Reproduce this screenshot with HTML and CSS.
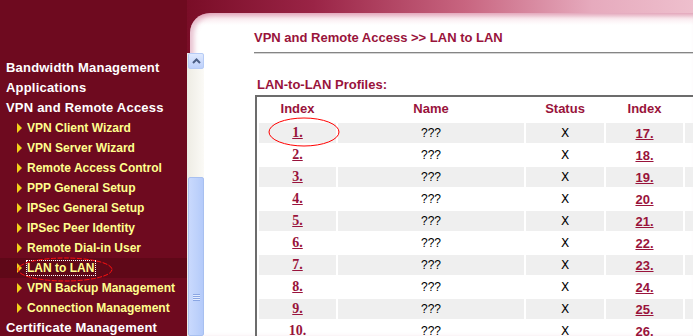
FILE: index.html
```html
<html>
    <head>
       <link rel="stylesheet" href="styles.css">
    </head>
    <body>
       <div class="page">
          <!-- left menu frame -->
          <div class="side">
             <ul class="menu">
                <li class="group">Bandwidth Management</li>
                <li class="group">Applications</li>
                <li class="group">VPN and Remote Access</li>
                <li class="item"><i class="arrow"></i>VPN Client Wizard</li>
                <li class="item"><i class="arrow"></i>VPN Server Wizard</li>
                <li class="item"><i class="arrow"></i>Remote Access Control</li>
                <li class="item"><i class="arrow"></i>PPP General Setup</li>
                <li class="item"><i class="arrow"></i>IPSec General Setup</li>
                <li class="item"><i class="arrow"></i>IPSec Peer Identity</li>
                <li class="item"><i class="arrow"></i>Remote Dial-in User</li>
                <li class="item current"><i class="arrow"></i><span class="focus">LAN to LAN</span>
                   <svg class="mark-side" width="96" height="25" viewBox="0 0 96 25"><ellipse cx="48" cy="12.5" rx="47" ry="11.5" fill="none" stroke="#ff1010" stroke-width="1" stroke-dasharray="5 1.5"/></svg>
                </li>
                <li class="item"><i class="arrow"></i>VPN Backup Management</li>
                <li class="item"><i class="arrow"></i>Connection Management</li>
                <li class="group">Certificate Management</li>
             </ul>
          </div>
          <!-- main frame -->
          <div class="main">
             <div class="panel">
                <div class="scrollbar">
                   <div class="sb-up">
                      <svg width="9" height="6" viewBox="0 0 9 6"><path d="M1 5 L4.5 1.5 L8 5" fill="none" stroke="#4c5f86" stroke-width="2"/></svg>
                   </div>
                   <div class="sb-track"></div>
                   <div class="sb-thumb"><span class="grip"></span></div>
                </div>
                <div class="content">
                   <div class="title">VPN and Remote Access &gt;&gt; LAN to LAN</div>
                   <div class="subtitle">LAN-to-LAN Profiles:</div>
                   <table class="profiles">
                      <colgroup>
                         <col class="c-idx"><col class="c-name"><col class="c-stat"><col class="c-idx"><col class="c-name">
                      </colgroup>
                      <tr>
                         <th>Index</th><th>Name</th><th>Status</th><th>Index</th><th></th>
                      </tr>
                      <tr class="odd">
                         <td class="mark-cell"><a class="num" href="#">1.</a>
                            <svg class="mark-one" width="72" height="30" viewBox="0 0 72 30"><ellipse cx="36" cy="15" rx="35" ry="14" fill="none" stroke="#ff0000" stroke-width="1"/></svg>
                         </td>
                         <td>???</td><td class="x">X</td><td><a class="num2" href="#">17.</a></td><td></td>
                      </tr>
                      <tr>
                         <td><a class="num" href="#">2.</a></td><td>???</td><td class="x">X</td><td><a class="num2" href="#">18.</a></td><td></td>
                      </tr>
                      <tr class="odd">
                         <td><a class="num" href="#">3.</a></td><td>???</td><td class="x">X</td><td><a class="num2" href="#">19.</a></td><td></td>
                      </tr>
                      <tr>
                         <td><a class="num" href="#">4.</a></td><td>???</td><td class="x">X</td><td><a class="num2" href="#">20.</a></td><td></td>
                      </tr>
                      <tr class="odd">
                         <td><a class="num" href="#">5.</a></td><td>???</td><td class="x">X</td><td><a class="num2" href="#">21.</a></td><td></td>
                      </tr>
                      <tr>
                         <td><a class="num" href="#">6.</a></td><td>???</td><td class="x">X</td><td><a class="num2" href="#">22.</a></td><td></td>
                      </tr>
                      <tr class="odd">
                         <td><a class="num" href="#">7.</a></td><td>???</td><td class="x">X</td><td><a class="num2" href="#">23.</a></td><td></td>
                      </tr>
                      <tr>
                         <td><a class="num" href="#">8.</a></td><td>???</td><td class="x">X</td><td><a class="num2" href="#">24.</a></td><td></td>
                      </tr>
                      <tr class="odd">
                         <td><a class="num" href="#">9.</a></td><td>???</td><td class="x">X</td><td><a class="num2" href="#">25.</a></td><td></td>
                      </tr>
                      <tr>
                         <td><a class="num" href="#">10.</a></td><td>???</td><td class="x">X</td><td><a class="num2" href="#">26.</a></td><td></td>
                      </tr>
                   </table>
                </div>
             </div>
          </div>
       </div>
    </body>
</html>
```

FILE: styles.css
```css
*
{
   margin: 0px;
   padding: 0px;
   box-sizing: border-box;
}
body
{
   font-family: "Liberation Sans", Arial, sans-serif;
   font-size: 12px;
   background-color: #6e0a1f;
   overflow: hidden;
   width: 693px;
   height: 336px;
}
.page
{
   display: flex;
   height: 336px;
}
/* left menu */
.side
{
   width: 187px;
   flex: none;
   background-color: #6e0a1f;
   padding-top: 58px;
}
.menu
{
   list-style: none;
}
.menu li
{
   height: 20px;
   line-height: 20px;
   white-space: nowrap;
   font-weight: bold;
   position: relative;
}
.group
{
   color: #ffffff;
   font-size: 13px;
   letter-spacing: 0.2px;
   padding-left: 6px;
}
.item
{
   color: #ffff8e;
   font-size: 12px;
   padding-left: 17px;
   display: flex;
   align-items: center;
}
.arrow
{
   width: 0;
   height: 0;
   border-left: 5px solid #f3d11a;
   border-top: 5px solid transparent;
   border-bottom: 5px solid transparent;
   margin-right: 5px;
}
.current
{
   background-color: #5f0818;
}
.focus
{
   outline: 1px dotted #ffffff;
   outline-offset: 0px;
   line-height: 14px;
   padding: 0 1px 0 0;
}
.mark-side
{
   position: absolute;
   left: 17px;
   top: -1px;
}
/* main frame */
.main
{
   flex: 1;
   min-width: 0;
   background: linear-gradient(90deg, #7a0d27 0%, #9a2446 25%, #c86580 55%, #e6aabd 80%, #eebfcd 100%);
}
.panel
{
   margin-top: 13px;
   margin-left: 3px;
   height: 323px;
   border-top-left-radius: 20px;
   background: linear-gradient(180deg, #f1c9d5 0px, #fbeef2 6px, #ffffff 12px);
   box-shadow: inset 4px 2px 5px rgba(190, 80, 120, 0.35);
   display: flex;
}
.scrollbar
{
   width: 17px;
   flex: none;
   margin-left: -3px;
   margin-top: 40px;
   display: flex;
   flex-direction: column;
   background: linear-gradient(90deg, #eeece4, #fbfaf6);
}
.sb-up
{
   height: 16px;
   margin: 0 0 0 1px;
   border: 1px solid #b6cbf6;
   border-radius: 2px;
   background: linear-gradient(180deg, #dfe9fe, #bdd0fa);
   display: flex;
   align-items: center;
   justify-content: center;
}
.sb-track
{
   height: 108px;
}
.sb-thumb
{
   flex: 1;
   margin-left: 1px;
   border: 1px solid #a8c0f0;
   border-radius: 2px;
   background: linear-gradient(90deg, #c9d9fd, #bdd1fb 60%, #b4cafa);
   position: relative;
}
.grip
{
   position: absolute;
   left: 4px;
   top: 116px;
   width: 7px;
   height: 7px;
   background: repeating-linear-gradient(180deg, #8aa6e4 0px, #8aa6e4 1px, #e4edff 1px, #e4edff 2px);
}
.content
{
   flex: 1;
   min-width: 0;
   padding-left: 50px;
   padding-top: 17px;
   overflow: hidden;
}
.title
{
   font-size: 13px;
   font-weight: bold;
   color: #99133b;
   line-height: 16px;
   padding-bottom: 6px;
   border-bottom: 1px solid #858585;
   box-shadow: 0 1px 0 #d4d4d4;
   white-space: nowrap;
}
.subtitle
{
   font-size: 13px;
   font-weight: bold;
   color: #99133b;
   line-height: 16px;
   margin-top: 24px;
   margin-left: 3px;
   white-space: nowrap;
}
/* profiles table */
.profiles
{
   margin-top: 2px;
   margin-left: 1px;
   border-collapse: separate;
   border-spacing: 2px;
   border-top: 2px solid #6c6c6c;
   border-left: 2px solid #6c6c6c;
   table-layout: fixed;
   width: 509px;
}
.c-idx
{
   width: 77px;
}
.c-name
{
   width: 186px;
}
.c-stat
{
   width: 78px;
}
.profiles th
{
   height: 22px;
   font-size: 13px;
   color: #99133b;
   font-weight: bold;
   text-align: center;
   vertical-align: top;
   padding-top: 2px;
}
.profiles td
{
   height: 20px;
   text-align: center;
   vertical-align: middle;
   color: #000000;
   font-size: 12px;
   white-space: nowrap;
}
.odd td
{
   background-color: #efefef;
}
.x
{
   font-family: "DejaVu Sans", sans-serif;
   font-size: 11px;
}
.num
{
   font-family: "Liberation Serif", "Times New Roman", serif;
   font-weight: bold;
   font-size: 14px;
   color: #99133b;
}
.num2
{
   font-weight: bold;
   font-size: 13px;
   color: #99133b;
}
.mark-cell
{
   position: relative;
}
.mark-one
{
   position: absolute;
   left: 9px;
   top: -6px;
}
```
